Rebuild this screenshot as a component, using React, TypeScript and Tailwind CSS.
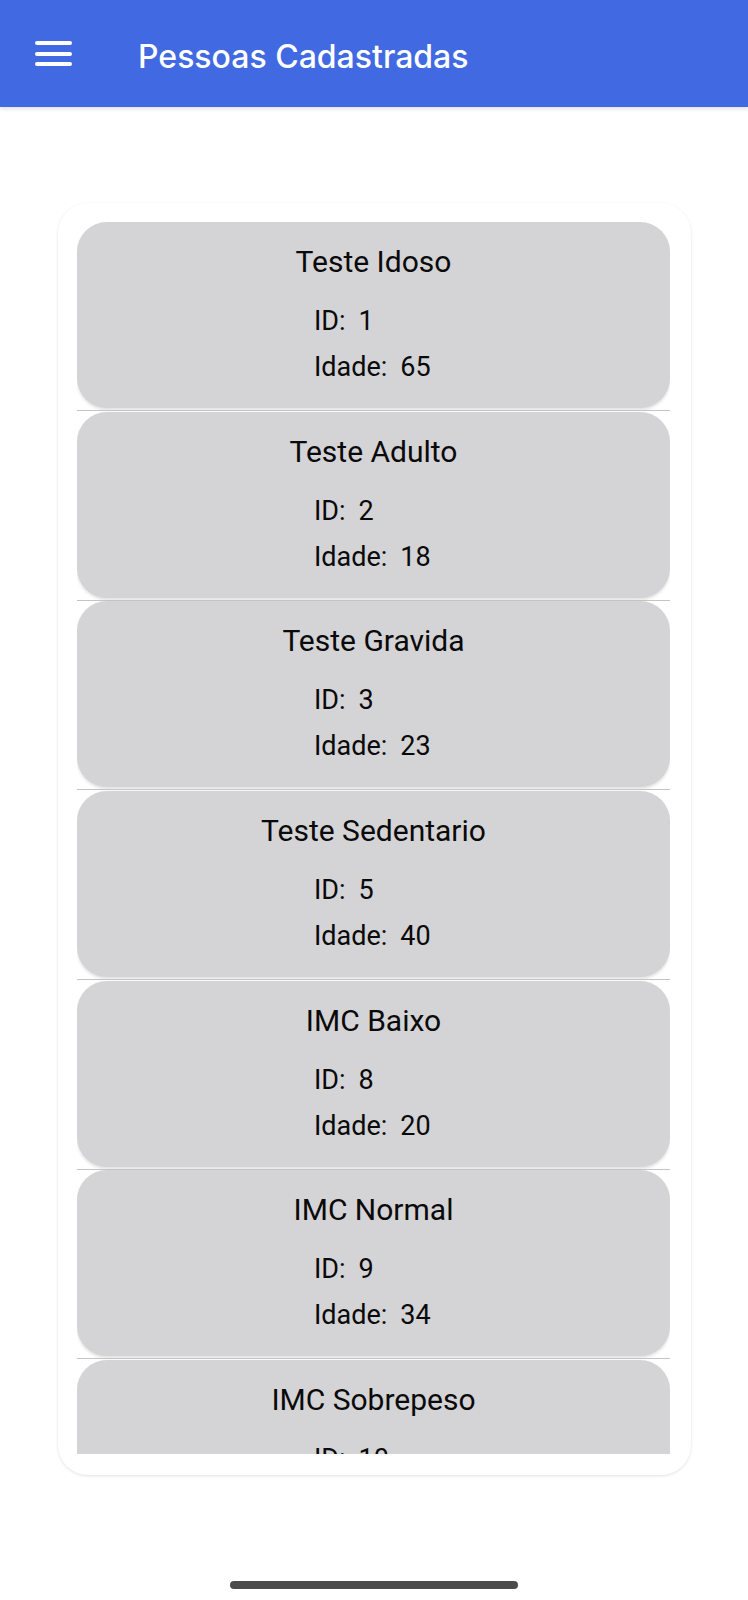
import React from 'react';

type Pessoa = { id: number; nome: string; idade: number };

const pessoas: Pessoa[] = [
  { id: 1, nome: 'Teste Idoso', idade: 65 },
  { id: 2, nome: 'Teste Adulto', idade: 18 },
  { id: 3, nome: 'Teste Gravida', idade: 23 },
  { id: 5, nome: 'Teste Sedentario', idade: 40 },
  { id: 8, nome: 'IMC Baixo', idade: 20 },
  { id: 9, nome: 'IMC Normal', idade: 34 },
  { id: 10, nome: 'IMC Sobrepeso', idade: 28 },
];

const PessoaCard: React.FC<{ pessoa: Pessoa }> = ({ pessoa }) => (
  <div className="h-[186px] shrink-0 rounded-[30px] bg-[#d4d3d5] pt-[22px] text-[#0a0a0a] shadow-[0_2px_3px_rgba(0,0,0,0.12)]">
    <p className="text-center text-[30px] leading-[36px]">{pessoa.nome}</p>
    <div className="mt-[18px] pl-[237px] text-[27px] leading-[46px]">
      <p className="flex gap-[13px]">
        <span>ID:</span>
        <span>{pessoa.id}</span>
      </p>
      <p className="flex gap-[13px]">
        <span>Idade:</span>
        <span>{pessoa.idade}</span>
      </p>
    </div>
  </div>
);

export default function App() {
  return (
    <div className="relative h-[1600px] w-[748px] overflow-hidden bg-white font-['Roboto',sans-serif]">
      <header className="relative z-10 flex h-[107px] items-start bg-[#4169e1] px-[35px] shadow-[0_2px_4px_rgba(0,0,0,0.12)]">
        <div className="mt-[41px] flex h-[25px] w-[37px] flex-col justify-between">
          <span className="h-[4px] w-full rounded-full bg-white" />
          <span className="h-[4px] w-full rounded-full bg-white" />
          <span className="h-[4px] w-full rounded-full bg-white" />
        </div>
        <h1 className="ml-[66px] mt-[39px] font-['Inter',sans-serif] text-[32px] font-medium leading-[36px] text-white">
          Pessoas Cadastradas
        </h1>
      </header>

      <main className="ml-[58px] mt-[96px] w-[633px] rounded-[30px] bg-white pb-[21px] pl-[19px] pr-[21px] pt-[19px] shadow-[0_1px_3px_rgba(0,0,0,0.12)]">
        <div className="flex h-[1232px] flex-col overflow-hidden">
          {pessoas.map((p, i) => (
            <React.Fragment key={p.id}>
              <PessoaCard pessoa={p} />
              {i < pessoas.length - 1 && (
                <div className="mb-[0.7px] mt-[2px] h-px shrink-0 bg-[#c4c4c4]" />
              )}
            </React.Fragment>
          ))}
        </div>
      </main>

      <div className="absolute left-[230px] top-[1581px] h-[8px] w-[288px] rounded-full bg-[#4a4a4a]" />
    </div>
  );
}
